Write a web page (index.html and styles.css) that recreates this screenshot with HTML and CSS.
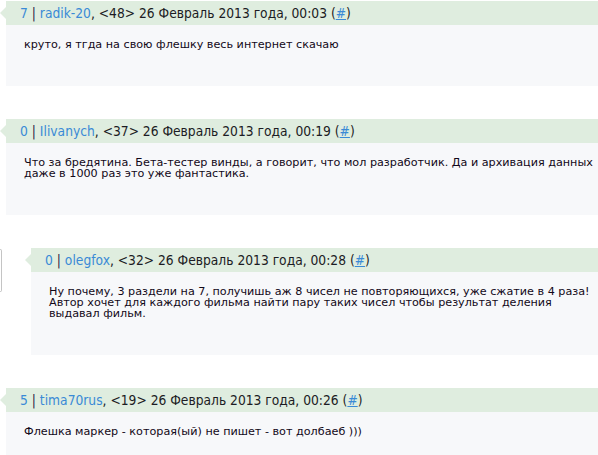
FILE: index.html
```html
<!DOCTYPE html>
<html>
<head>
<meta charset="utf-8">
<link rel="stylesheet" href="styles.css">
</head>
<body>
<div class="comments">
  <div class="comment">
    <div class="head"><span class="rating">7</span> <span class="sep">|</span> <a class="user" href="#">radik-20</a>, &lt;48&gt; 26 Февраль 2013 года, 00:03 (<a class="perma" href="#">#</a>)</div>
    <div class="text">круто, я тгда на свою флешку весь интернет скачаю</div>
  </div>
  <div class="comment">
    <div class="head"><span class="rating">0</span> <span class="sep">|</span> <a class="user" href="#">Ilivanych</a>, &lt;37&gt; 26 Февраль 2013 года, 00:19 (<a class="perma" href="#">#</a>)</div>
    <div class="text">Что за бредятина. Бета-тестер винды, а говорит, что мол разработчик. Да и архивация данных даже в 1000 раз это уже фантастика.</div>
  </div>
  <div class="reply">
    <div class="thread"><span class="thread-line"></span></div>
    <div class="comment">
      <div class="head"><span class="rating">0</span> <span class="sep">|</span> <a class="user" href="#">olegfox</a>, &lt;32&gt; 26 Февраль 2013 года, 00:28 (<a class="perma" href="#">#</a>)</div>
      <div class="text">Ну почему, 3 раздели на 7, получишь аж 8 чисел не повторяющихся, уже сжатие в 4 раза! Автор хочет для каждого фильма найти пару таких чисел чтобы результат деления<br>выдавал фильм.</div>
    </div>
  </div>
  <div class="comment">
    <div class="head"><span class="rating">5</span> <span class="sep">|</span> <a class="user" href="#">tima70rus</a>, &lt;19&gt; 26 Февраль 2013 года, 00:26 (<a class="perma" href="#">#</a>)</div>
    <div class="text">Флешка маркер - которая(ый) не пишет - вот долбаеб )))</div>
  </div>
</div>
</body>
</html>
```

FILE: styles.css
```css
html, body {
  margin: 0;
  padding: 0;
  background: #ffffff;
}

.comments {
  display: flex;
  flex-direction: column;
  gap: 33px;
  padding-top: 1px;
}

.comment {
  flex: 1;
  min-width: 0;
  padding-left: 6px;
}

.head {
  position: relative;
  height: 24px;
  line-height: 24px;
  background: #dfeddf;
  padding-left: 14px;
  font-family: "DejaVu Sans Condensed", "DejaVu Sans", sans-serif;
  font-size: 13.7px;
  color: #1c1c24;
  white-space: nowrap;
}

.head::before {
  content: "";
  position: absolute;
  left: -6px;
  top: 6px;
  border-style: solid;
  border-width: 6px 6px 6px 0;
  border-color: transparent #dfeddf transparent transparent;
}

.rating {
  color: #3a8ad6;
}

.sep {
  color: #2c1f48;
}

.user {
  color: #3a8ad6;
  text-decoration: none;
}

.perma {
  color: #3a8ad6;
  text-decoration: underline;
}

.text {
  background: #f7f8fa;
  padding: 14px 4px 36px 18px;
  font-family: "DejaVu Sans", sans-serif;
  font-size: 11.2px;
  line-height: 11px;
  color: #120818;
}

.reply {
  display: flex;
}

.thread {
  width: 25px;
  flex: none;
}

.thread-line {
  display: block;
  width: 1px;
  height: 41px;
  margin-top: 1px;
  border: 1px solid #c4c4c4;
  border-left: none;
  border-radius: 0 3px 3px 0;
}
```
